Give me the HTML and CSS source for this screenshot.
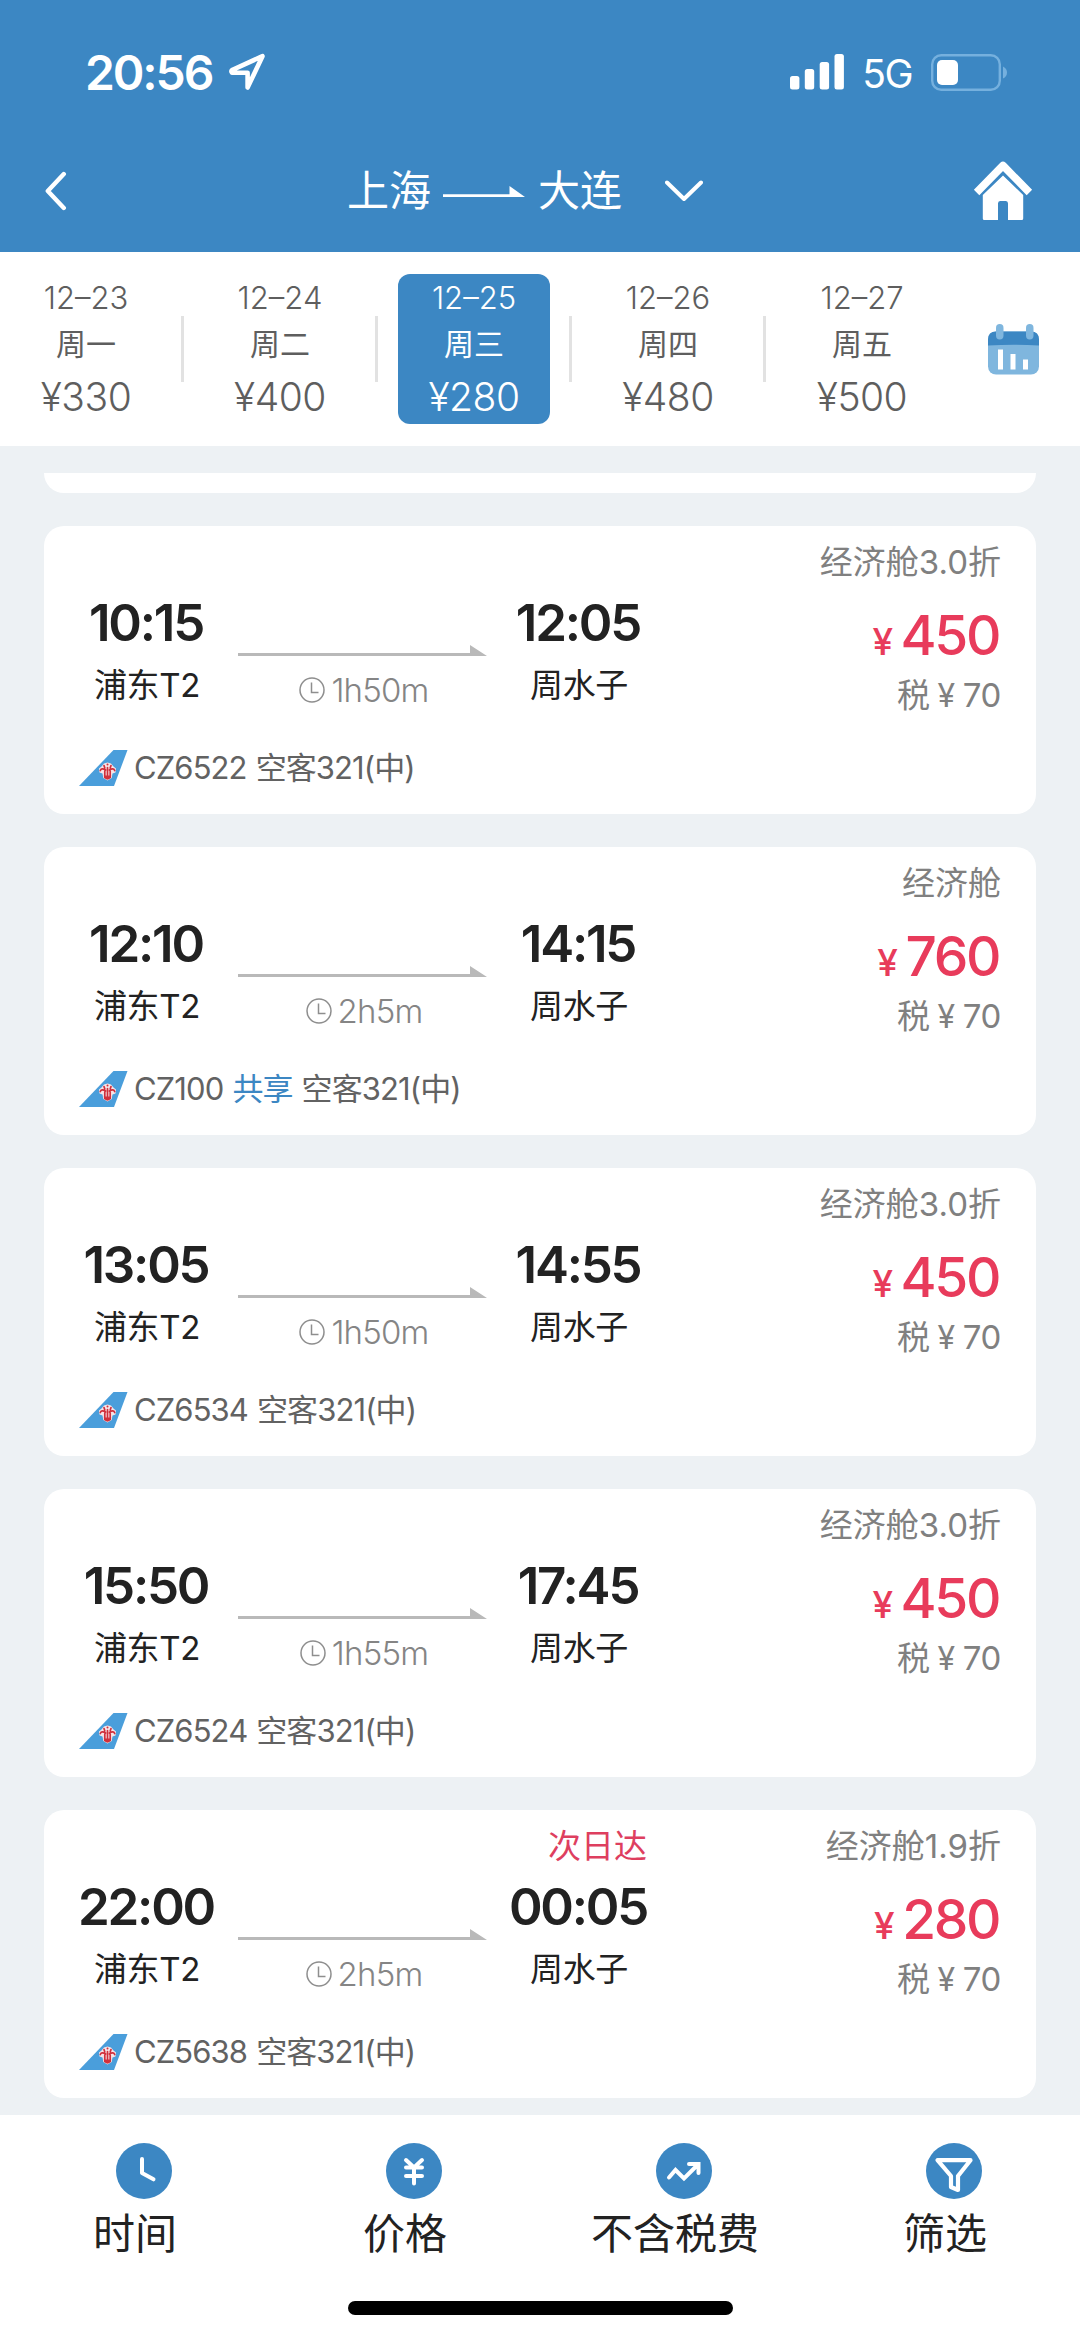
FILE: index.html
```html
<!DOCTYPE html>
<html lang="zh-CN">
<head>
<meta charset="utf-8">
<title>上海 - 大连</title>
<link rel="stylesheet" href="styles.css">
</head>
<body>
<svg width="0" height="0" class="defs">
  <symbol id="arrow" viewBox="0 0 249 11"><path d="M0 8h232V0l17 11H0z" fill="#b9b9b9"/></symbol>
  <symbol id="clock" viewBox="0 0 26 26"><circle cx="13" cy="13" r="12" fill="none" stroke="#8e8e8e" stroke-width="1.5"/><path d="M12.500 5.500v10h7" fill="none" stroke="#8e8e8e" stroke-width="1.500"/></symbol>
  <symbol id="tail" viewBox="0 0 49 36">
    <path d="M0 36 34.500 0H48.500L35 36z" fill="#4a9edb"/>
    <path d="M28.500 12.500l3.500 1 2.500 3 2.500 2-.5 4-3 1-.8 4.500-4.200 2.500-4.200-2.500-.8-4.500-3-1-.5-4 2.500-2 2.500-3z" fill="#f6e4e8"/>
    <path d="M26.600 20q-4-2.500-5.300.5M30.400 20q4-2.500 5.300.5M25.800 27.500V21M28.500 28.500V17.500M31.200 27.500V21M25.800 18l-.8-2.500M31.200 18l.8-2.500" fill="none" stroke="#d0303c" stroke-width="1.700" stroke-linecap="round"/>
    <path d="M24.800 25.500h7.400q-.5 4-3.700 4t-3.700-4z" fill="#d0303c"/>
    <circle cx="28.500" cy="14.600" r="1" fill="#d0303c"/>
  </symbol>
</svg>
<div class="screen">
  <header class="header">
    <div class="status">
      <span class="clock">20:56</span>
      <svg class="locate" width="38" height="38" viewBox="0 0 38 38"><path d="M34.500 3.200 19.600 34.500V19.700H4Q2.500 18 4.500 16.800z" fill="none" stroke="#fff" stroke-width="4.600" stroke-linejoin="round"/></svg>
      <svg class="signal" width="54" height="36" viewBox="0 0 54 36"><g fill="#fff"><rect y="22" width="9.400" height="13.500" rx="2.500"/><rect x="14.800" y="15" width="9.400" height="20.500" rx="2.500"/><rect x="29.700" y="8" width="9.400" height="27.500" rx="2.500"/><rect x="44.500" y="0" width="9.400" height="35.500" rx="2.500"/></g></svg>
      <span class="network">5G</span>
      <svg class="battery" width="77" height="37" viewBox="0 0 77 37"><rect x="1.200" y="1.200" width="67.600" height="34.600" rx="9" fill="none" stroke="#75b0de" stroke-width="2.400"/><rect x="6" y="6" width="21" height="25" rx="5" fill="#fff"/><path d="M72 12.500q4 2 4 6t-4 6z" fill="#75b0de"/></svg>
    </div>
    <div class="nav">
      <svg width="22" height="40" viewBox="0 0 22 40"><path d="M18.800 3 2.800 20 18.800 37" fill="none" stroke="#fff" stroke-width="4.400" stroke-linecap="round" stroke-linejoin="round"/></svg>
      <div class="title">
        <span>上海</span>
        <svg class="title-arrow" width="82" height="12" viewBox="0 0 82 12"><path d="M0 8.200h66.500V0L82 11H0z" fill="#fff"/></svg>
        <span>大连</span>
        <svg class="title-more" width="38" height="22" viewBox="0 0 38 22"><path d="M2 2.500 19 19 36 2.500" fill="none" stroke="#fff" stroke-width="4" stroke-linecap="round" stroke-linejoin="round"/></svg>
      </div>
      <svg width="62" height="60" viewBox="0 0 62 60"><path d="M4.600 31.500 31 4.500 57.400 31.500" fill="none" stroke="#fff" stroke-width="7.600" stroke-linejoin="round"/><path d="M31 14.500 51.200 34V57.500q0 1.500-1.500 1.500H36V42.500q0-2.500-2-2.500H28q-2 0-2 2.500V59H12.300q-1.500 0-1.500-1.500V34z" fill="#fff"/></svg>
    </div>
  </header>

  <nav class="dates">
    <div class="day"><span class="md">12–23</span><span class="wk">周一</span><span class="low">¥330</span></div>
    <div class="day"><span class="md">12–24</span><span class="wk">周二</span><span class="low">¥400</span></div>
    <div class="day active"><span class="md">12–25</span><span class="wk">周三</span><span class="low">¥280</span></div>
    <div class="day"><span class="md">12–26</span><span class="wk">周四</span><span class="low">¥480</span></div>
    <div class="day"><span class="md">12–27</span><span class="wk">周五</span><span class="low">¥500</span></div>
    <svg class="calendar" width="51" height="51" viewBox="0 0 51 51"><rect y="7.500" width="51" height="43" rx="8" fill="#7fb6de"/><path d="M0 21.500V15.500q0-8 8-8H43q8 0 8 8v6q-25-1.500-51 0z" fill="#3c87c3"/><rect x="8" y="0" width="7.500" height="15.500" rx="3.700" fill="#7fb6de"/><rect x="38" y="0" width="7.500" height="15.500" rx="3.700" fill="#7fb6de"/><path d="M10 25.500h5v20h-5zM22.500 30h5v15.500h-5zM35 35.500h5v10h-5z" fill="#fff"/></svg>
  </nav>

  <main class="list">
    <div class="card-end"></div>
    <article class="card">
      <div class="trip">
        <div class="stop"><em></em><b>10:15</b><span>浦东T2</span></div>
        <div class="route"><svg width="249" height="11"><use href="#arrow"/></svg><p><svg width="26" height="26"><use href="#clock"/></svg>1h50m</p></div>
        <div class="stop arrive"><em></em><b>12:05</b><span>周水子</span></div>
        <div class="fare"><span>经济舱3.0折</span><strong><i>¥</i>450</strong><span class="tax">税<i>¥</i>70</span></div>
      </div>
      <div class="plane"><svg width="49" height="36"><use href="#tail"/></svg><span>CZ6522</span><span>空客321(中)</span></div>
    </article>
    <article class="card">
      <div class="trip">
        <div class="stop"><em></em><b>12:10</b><span>浦东T2</span></div>
        <div class="route"><svg width="249" height="11"><use href="#arrow"/></svg><p><svg width="26" height="26"><use href="#clock"/></svg>2h5m</p></div>
        <div class="stop arrive"><em></em><b>14:15</b><span>周水子</span></div>
        <div class="fare"><span>经济舱</span><strong><i>¥</i>760</strong><span class="tax">税<i>¥</i>70</span></div>
      </div>
      <div class="plane"><svg width="49" height="36"><use href="#tail"/></svg><span>CZ100</span><span class="share">共享</span><span>空客321(中)</span></div>
    </article>
    <article class="card">
      <div class="trip">
        <div class="stop"><em></em><b>13:05</b><span>浦东T2</span></div>
        <div class="route"><svg width="249" height="11"><use href="#arrow"/></svg><p><svg width="26" height="26"><use href="#clock"/></svg>1h50m</p></div>
        <div class="stop arrive"><em></em><b>14:55</b><span>周水子</span></div>
        <div class="fare"><span>经济舱3.0折</span><strong><i>¥</i>450</strong><span class="tax">税<i>¥</i>70</span></div>
      </div>
      <div class="plane"><svg width="49" height="36"><use href="#tail"/></svg><span>CZ6534</span><span>空客321(中)</span></div>
    </article>
    <article class="card">
      <div class="trip">
        <div class="stop"><em></em><b>15:50</b><span>浦东T2</span></div>
        <div class="route"><svg width="249" height="11"><use href="#arrow"/></svg><p><svg width="26" height="26"><use href="#clock"/></svg>1h55m</p></div>
        <div class="stop arrive"><em></em><b>17:45</b><span>周水子</span></div>
        <div class="fare"><span>经济舱3.0折</span><strong><i>¥</i>450</strong><span class="tax">税<i>¥</i>70</span></div>
      </div>
      <div class="plane"><svg width="49" height="36"><use href="#tail"/></svg><span>CZ6524</span><span>空客321(中)</span></div>
    </article>
    <article class="card">
      <div class="trip">
        <div class="stop"><em></em><b>22:00</b><span>浦东T2</span></div>
        <div class="route"><svg width="249" height="11"><use href="#arrow"/></svg><p><svg width="26" height="26"><use href="#clock"/></svg>2h5m</p></div>
        <div class="stop arrive"><em>次日达</em><b>00:05</b><span>周水子</span></div>
        <div class="fare"><span>经济舱1.9折</span><strong><i>¥</i>280</strong><span class="tax">税<i>¥</i>70</span></div>
      </div>
      <div class="plane"><svg width="49" height="36"><use href="#tail"/></svg><span>CZ5638</span><span>空客321(中)</span></div>
    </article>
  </main>

  <footer class="bottom">
    <div class="tabs">
      <div class="tab"><svg width="56" height="56" viewBox="0 0 56 56"><circle cx="28" cy="28" r="28" fill="#3c87c3"/><path d="M26 16v14l11.500 6.300" fill="none" stroke="#fff" stroke-width="4" stroke-linecap="round" stroke-linejoin="round"/></svg><span>时间</span></div>
      <div class="tab"><svg width="56" height="56" viewBox="0 0 56 56"><circle cx="28" cy="28" r="28" fill="#3c87c3"/><path d="M20 17l8 7.500 8-7.500M20 24.500h16M20 33h16M28 24.500V40.500" fill="none" stroke="#fff" stroke-width="4" stroke-linecap="round" stroke-linejoin="round"/></svg><span>价格</span></div>
      <div class="tab"><svg width="56" height="56" viewBox="0 0 56 56"><circle cx="28" cy="28" r="28" fill="#3c87c3"/><path d="M13 34.500 19.500 27 28 35.500 41 22.500M33 21h9.500v9" fill="none" stroke="#fff" stroke-width="4" stroke-linecap="round"/></svg><span>不含税费</span></div>
      <div class="tab"><svg width="56" height="56" viewBox="0 0 56 56"><circle cx="28" cy="28" r="28" fill="#3c87c3"/><path d="M11.500 17.200h33L32 33V47l-7-3V33z" fill="none" stroke="#fff" stroke-width="4.200" stroke-linejoin="round"/></svg><span>筛选</span></div>
    </div>
    <div class="home-bar"></div>
  </footer>
</div>
</body>
</html>
```
FILE: styles.css
```css
* { box-sizing: border-box; }
body {
  margin: 0;
  font-family: Inter, "Noto Sans CJK SC", sans-serif;
  font-weight: 400;
  color: #222;
  background: #edf1f4;
}
svg { display: block; flex: none; }
.defs { position: absolute; }
em, i { font-style: normal; }
.screen { display: flex; flex-direction: column; width: 1080px; height: 2337px; overflow: hidden; }

.header { height: 252px; flex: none; background: #3c87c3; color: #fff; }
.status { display: flex; align-items: center; height: 144px; padding: 0 72px 0 85px; }
.clock { font-size: 48px; font-weight: 600; letter-spacing: -2.100px; }
.locate { margin-left: 16px; }
.signal { margin-left: auto; }
.network { margin: 3px 19px 0 18px; font-size: 39px; font-weight: 400; letter-spacing: -1.500px; }
.nav { display: flex; align-items: center; height: 94px; padding: 0 46px 0 45px; }
.title { display: flex; flex: 1; align-items: center; padding-left: 280px; font-size: 42px; font-weight: 400; line-height: 60px; }
.title-arrow { margin: 2px 13px 0 12px; }
.title-more { margin-left: 43px; }

.dates { display: flex; flex: none; height: 194px; padding-top: 22px; background: #fff; color: #5e5e5e; }
.day { position: relative; display: flex; flex-direction: column; align-items: center; width: 152px; height: 150px; margin-right: 42px; padding-top: 5px; border-radius: 12px; }
.day:first-child { margin-left: 10px; }
.day::after { content: ""; position: absolute; right: -22px; top: 42px; width: 3px; height: 66px; background: #e2e2e2; }
.day:nth-child(5)::after { display: none; }
.md { font-size: 31px; font-weight: 350; line-height: 38px; }
.wk { font-size: 30px; line-height: 38px; margin-top: 8px; }
.low { font-size: 39px; font-weight: 350; line-height: 50px; margin-top: 9px; letter-spacing: -.5px; }
.active { background: #3c87c3; color: #fff; }
.calendar { margin: 50px 0 0 8px; }

.list { display: flex; flex-direction: column; flex: none; gap: 33px; height: 1669px; padding: 27px 44px 0; }
.card-end { flex: none; height: 20px; overflow: hidden; border-radius: 0 0 20px 20px; background: #fff; }
.card { flex: none; height: 288px; padding: 14px 35px 0 35px; border-radius: 20px; background: #fff; }
.trip { display: flex; height: 206px; }
.stop { display: flex; flex-direction: column; align-items: center; width: 134px; }
.stop em { height: 44px; margin-bottom: 9px; font-size: 33px; line-height: 44px; color: #de3f5f; }
.stop b { font-size: 51px; font-weight: 600; line-height: 60px; white-space: nowrap; letter-spacing: -2.200px; }
.stop span { margin-top: 10px; padding-left: 2px; font-size: 33px; line-height: 44px; letter-spacing: -.3px; }
.arrive { margin-left: 24px; }
.arrive em { align-self: flex-end; margin-right: -2px; white-space: nowrap; }
.route { display: flex; flex-direction: column; align-items: center; width: 249px; margin-left: 25px; padding-top: 105px; }
.route p { display: flex; align-items: center; gap: 6px; margin: 12px 0 0; padding-left: 3px; font-size: 33px; font-weight: 350; line-height: 44px; letter-spacing: -.8px; color: #858585; }
.fare { display: flex; flex-direction: column; align-items: flex-end; flex: 1; color: #808080; font-size: 33px; line-height: 44px; }
.fare strong { margin: 20px 2px 0 0; font-size: 55px; font-weight: 500; line-height: 62px; letter-spacing: -2.400px; color: #e83b5b; }
.fare strong i { margin-right: 10px; font-size: 37px; line-height: 1; }
.tax { margin-top: 7px; }
.tax i { margin: 0 8px; font-size: 32px; line-height: 1; }
.tax { letter-spacing: -.4px; }
.plane { display: flex; align-items: center; height: 44px; color: #626262; font-size: 31px; line-height: 44px; letter-spacing: -.9px; gap: 9px; }
.plane svg { margin-right: -3px; }
.share { color: #3c87c3; }

.bottom { display: flex; flex: 1; flex-direction: column; align-items: center; background: #fff; padding-top: 28px; }
.tabs { display: flex; width: 100%; height: 158px; }
.tab { display: flex; flex-direction: column; align-items: center; width: 270px; font-size: 42px; line-height: 56px; }
.tab svg { margin: 0 0 7px 17px; }
.home-bar { width: 385px; height: 14px; border-radius: 7px; background: #000; }
```
